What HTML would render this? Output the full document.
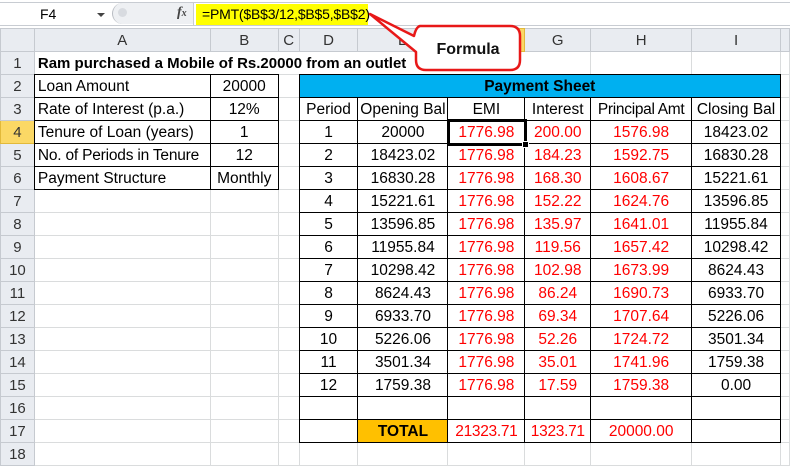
<!DOCTYPE html>
<html><head><meta charset="utf-8"><style>
body{margin:0;width:790px;height:453px;overflow:hidden;background:#fff;font-family:"Liberation Sans",sans-serif;position:relative}
#fb{position:absolute;left:0;top:0;width:790px;height:28px;background:#fff}
table{position:absolute;left:0;top:28px;border-collapse:collapse;table-layout:fixed;font-size:15.5px}
tr{height:23px}
td{height:22px;padding:0;border:1px solid #dadcdd;white-space:nowrap;overflow:visible;text-align:center;line-height:21px}
td.h{background:#e9ecf1;color:#333;border-color:#c6cad0;font-size:15px}
td.rh{background:#e9ecf1;color:#333;border-color:#c6cad0;text-align:center;font-size:15px}
td.hl{background:#fbd865;border-color:#e2b93a}
.b{border:1px double #000}
.l{text-align:left;padding-left:3px}
.r{color:#f00}
</style></head><body>
<div id="fb">
 <div style="position:absolute;left:0;top:2px;width:790px;height:1px;background:#c8ccd2"></div>
 <div style="position:absolute;left:0;top:25px;width:790px;height:1px;background:#c8ccd2"></div>
 <div style="position:absolute;left:40px;top:6px;font-size:14px">F4</div>
 <div style="position:absolute;left:97px;top:13px;width:0;height:0;border-left:4px solid transparent;border-right:4px solid transparent;border-top:4px solid #444"></div>
 <div style="position:absolute;left:112px;top:3px;width:80px;height:21px;background:#eef0f3;border-radius:11px 0 0 11px;border-left:1px solid #b8bcc2"></div>
 <div style="position:absolute;left:118px;top:8px;width:9px;height:9px;border-radius:50%;background:#d8dbe0"></div>
 <div style="position:absolute;left:177px;top:5px;font-family:'Liberation Serif',serif;font-style:italic;font-weight:bold;font-size:14px;color:#444">f<span style="font-size:10px">x</span></div>
 <div style="position:absolute;left:193px;top:3px;width:1px;height:22px;background:#c8ccd2"></div>
 <div style="position:absolute;left:196px;top:4px;width:172px;height:21px;background:#ffff00;font-size:14px;line-height:21px;padding-left:6px;box-sizing:border-box;letter-spacing:-0.2px;white-space:nowrap">=PMT($B$3/12,$B$5,$B$2)</div>
</div>
<table>
<colgroup><col style="width:34px"><col style="width:176px"><col style="width:68px"><col style="width:21px"><col style="width:59px"><col style="width:90px"><col style="width:77px"><col style="width:66px"><col style="width:101px"><col style="width:89px"><col style="width:9px"></colgroup>
<tr><td class="h"></td><td class="h">A</td><td class="h">B</td><td class="h">C</td><td class="h">D</td><td class="h">E</td><td class="h hl">F</td><td class="h">G</td><td class="h">H</td><td class="h">I</td><td class="h"></td></tr>
<tr><td class="rh">1</td><td class="l" colspan="6" style="font-weight:bold;font-size:15px;border-right-color:transparent">Ram purchased a Mobile of Rs.20000 from an outlet</td><td></td><td></td><td></td><td></td></tr>
<tr><td class="rh">2</td><td class="b l">Loan Amount</td><td class="b">20000</td><td></td><td class="b" colspan="6" style="background:#00b0f0;font-weight:bold">Payment Sheet</td><td></td></tr>
<tr><td class="rh">3</td><td class="b l">Rate of Interest (p.a.)</td><td class="b">12%</td><td></td><td class="b">Period</td><td class="b">Opening Bal</td><td class="b">EMI</td><td class="b">Interest</td><td class="b" style="letter-spacing:-0.3px">Principal Amt</td><td class="b">Closing Bal</td><td></td></tr>
<tr><td class="rh hl">4</td><td class="b l">Tenure of Loan (years)</td><td class="b">1</td><td></td><td class="b">1</td><td class="b">20000</td><td class="b r">1776.98</td><td class="b r">200.00</td><td class="b r">1576.98</td><td class="b">18423.02</td><td></td></tr>
<tr><td class="rh">5</td><td class="b l" style="letter-spacing:-0.2px">No. of Periods in Tenure</td><td class="b">12</td><td></td><td class="b">2</td><td class="b">18423.02</td><td class="b r">1776.98</td><td class="b r">184.23</td><td class="b r">1592.75</td><td class="b">16830.28</td><td></td></tr>
<tr><td class="rh">6</td><td class="b l">Payment Structure</td><td class="b">Monthly</td><td></td><td class="b">3</td><td class="b">16830.28</td><td class="b r">1776.98</td><td class="b r">168.30</td><td class="b r">1608.67</td><td class="b">15221.61</td><td></td></tr>
<tr><td class="rh">7</td><td></td><td></td><td></td><td class="b">4</td><td class="b">15221.61</td><td class="b r">1776.98</td><td class="b r">152.22</td><td class="b r">1624.76</td><td class="b">13596.85</td><td></td></tr>
<tr><td class="rh">8</td><td></td><td></td><td></td><td class="b">5</td><td class="b">13596.85</td><td class="b r">1776.98</td><td class="b r">135.97</td><td class="b r">1641.01</td><td class="b">11955.84</td><td></td></tr>
<tr><td class="rh">9</td><td></td><td></td><td></td><td class="b">6</td><td class="b">11955.84</td><td class="b r">1776.98</td><td class="b r">119.56</td><td class="b r">1657.42</td><td class="b">10298.42</td><td></td></tr>
<tr><td class="rh">10</td><td></td><td></td><td></td><td class="b">7</td><td class="b">10298.42</td><td class="b r">1776.98</td><td class="b r">102.98</td><td class="b r">1673.99</td><td class="b">8624.43</td><td></td></tr>
<tr><td class="rh">11</td><td></td><td></td><td></td><td class="b">8</td><td class="b">8624.43</td><td class="b r">1776.98</td><td class="b r">86.24</td><td class="b r">1690.73</td><td class="b">6933.70</td><td></td></tr>
<tr><td class="rh">12</td><td></td><td></td><td></td><td class="b">9</td><td class="b">6933.70</td><td class="b r">1776.98</td><td class="b r">69.34</td><td class="b r">1707.64</td><td class="b">5226.06</td><td></td></tr>
<tr><td class="rh">13</td><td></td><td></td><td></td><td class="b">10</td><td class="b">5226.06</td><td class="b r">1776.98</td><td class="b r">52.26</td><td class="b r">1724.72</td><td class="b">3501.34</td><td></td></tr>
<tr><td class="rh">14</td><td></td><td></td><td></td><td class="b">11</td><td class="b">3501.34</td><td class="b r">1776.98</td><td class="b r">35.01</td><td class="b r">1741.96</td><td class="b">1759.38</td><td></td></tr>
<tr><td class="rh">15</td><td></td><td></td><td></td><td class="b">12</td><td class="b">1759.38</td><td class="b r">1776.98</td><td class="b r">17.59</td><td class="b r">1759.38</td><td class="b">0.00</td><td></td></tr>
<tr><td class="rh">16</td><td></td><td></td><td></td><td class="b"></td><td class="b"></td><td class="b"></td><td class="b"></td><td class="b"></td><td class="b"></td><td></td></tr>
<tr><td class="rh">17</td><td></td><td></td><td></td><td class="b"></td><td class="b" style="background:#ffc000;font-weight:bold">TOTAL</td><td class="b r" style="letter-spacing:-0.3px">21323.71</td><td class="b r" style="letter-spacing:-0.3px">1323.71</td><td class="b r">20000.00</td><td class="b"></td><td></td></tr>
<tr><td class="rh">18</td><td></td><td></td><td></td><td></td><td></td><td></td><td></td><td></td><td></td><td></td></tr>
</table>
<div style="position:absolute;left:447px;top:119px;width:74px;height:21px;border:3px solid #000"></div>
<div style="position:absolute;left:522px;top:141px;width:5px;height:5px;background:#000;border:1px solid #fff"></div>
<svg style="position:absolute;left:0;top:0" width="790" height="453">
 <path d="M420 26 H510 Q520 26 520 36 V60 Q520 70 510 70 H426 Q416 70 416 60 V52 L370 14 L414 36 Q416 27 420 26 Z" fill="#fff" stroke="#e81818" stroke-width="2.5" stroke-linejoin="round"/>
 <text x="468" y="54" text-anchor="middle" font-family="Liberation Sans" font-weight="bold" font-size="16" fill="#111">Formula</text>
</svg>
</body></html>
